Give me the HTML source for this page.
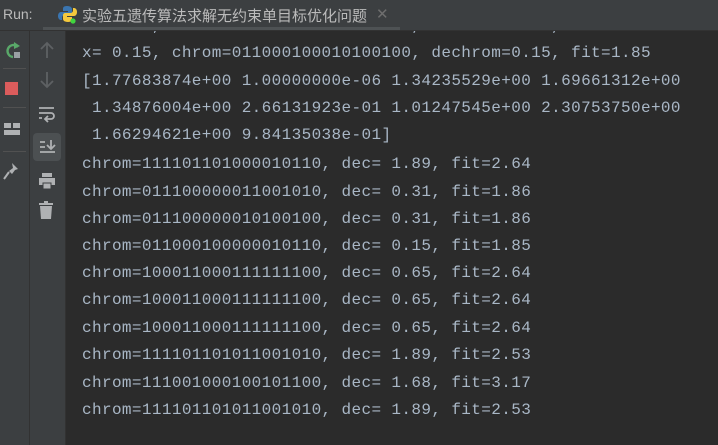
<!DOCTYPE html>
<html><head><meta charset="utf-8"><style>
*{margin:0;padding:0}
body{width:718px;height:445px;background:#2b2b2b;overflow:hidden;position:relative;font-family:"Liberation Mono",monospace}
#hdr{position:absolute;left:0;top:0;width:718px;height:30px;background:#3c3f41;border-bottom:1px solid #323232;z-index:2}
#hdr .run{position:absolute;left:3px;top:6px;font:14px "Liberation Sans",sans-serif;color:#bbbbbb}
#hdr .title{position:absolute;left:82px;top:5px;font:15px "Liberation Sans","Noto Sans CJK SC",sans-serif;color:#bbbbbb}
#hdr .x{position:absolute;left:376px;top:5px;font:15px "Liberation Sans",sans-serif;color:#6e6e6e}
#hdr .ul{position:absolute;left:43px;top:27px;width:357px;height:3px;background:#4e5254}
#lb{position:absolute;left:0;top:31px;width:29px;height:414px;background:#3c3f41;border-right:1px solid #323232}
#lb2{position:absolute;left:30px;top:31px;width:35px;height:414px;background:#3c3f41;border-right:1px solid #323232}
.l{position:absolute;left:82px;font-size:16px;letter-spacing:0.38px;color:#a9b7c6;white-space:pre;line-height:18px}
.sep{position:absolute;left:0;width:23px;height:1px;background:#515151}
</style></head><body>
<div id="hdr"><span class="run">Run:</span>
<svg style="position:absolute;left:58px;top:5px" width="19" height="19" viewBox="0 0 19 19"><path d="M9 1c-4 0-4 2-4 3v2h5v1H3c-2 0-3 2-3 4s1 4 3 4h1v-2c0-2 1-3 3-3h5c1 0 2-1 2-2V4c0-1-1-3-5-3z" fill="#3a75b0"/><path d="M10 17c4 0 4-2 4-3v-2H9v-1h7c2 0 3-2 3-4s-1-4-3-4h-1v2c0 2-1 3-3 3H7c-1 0-2 1-2 2v4c0 1 1 3 5 3z" fill="#f5c93d"/><circle cx="15" cy="16" r="2.6" fill="#3fd63f"/></svg>
<span class="title">实验五遗传算法求解无约束单目标优化问题</span><span class="x">✕</span><div class="ul"></div></div>
<div id="lb">
<svg style="position:absolute;left:4px;top:10px" width="18" height="20"><path d="M14 6A6 6 0 1 0 9 16" stroke="#59a869" stroke-width="2.4" fill="none"/><path d="M10 1l6 4-6 3z" fill="#59a869"/><rect x="10" y="11" width="6" height="6" fill="#9aa0a4"/></svg>
<div class="sep" style="top:37px;left:3px"></div>
<div style="position:absolute;left:5px;top:51px;width:13px;height:13px;background:#db5c5c"></div>
<div class="sep" style="top:76px;left:3px"></div>
<svg style="position:absolute;left:3px;top:91px" width="18" height="14"><rect x="1" y="1" width="7" height="5" fill="#afb1b3"/><rect x="10" y="1" width="7" height="5" fill="#afb1b3"/><rect x="1" y="8" width="16" height="5" fill="#afb1b3"/></svg>
<div class="sep" style="top:120px;left:3px"></div>
<svg style="position:absolute;left:2px;top:130px" width="18" height="20"><path d="M10 2l6 6-3 1-3 4-3-3 4-3z" fill="#afb1b3"/><path d="M7 11l-5 7" stroke="#afb1b3" stroke-width="2"/></svg>
</div>
<div id="lb2">
<svg style="position:absolute;left:8px;top:10px" width="18" height="18"><path d="M9 2v15M3 8l6-6 6 6" stroke="#5e6163" stroke-width="1.8" fill="none"/></svg>
<svg style="position:absolute;left:8px;top:40px" width="18" height="18"><path d="M9 1v15M3 10l6 6 6-6" stroke="#5e6163" stroke-width="1.8" fill="none"/></svg>
<svg style="position:absolute;left:8px;top:74px" width="18" height="18"><path d="M1 3h15M1 8h12a3 3 0 0 1 0 6H8M10 11l-3 3 3 3M1 13h3" stroke="#afb1b3" stroke-width="1.8" fill="none"/></svg>
<div style="position:absolute;left:3px;top:102px;width:28px;height:28px;background:#4c5052;border-radius:4px"></div>
<svg style="position:absolute;left:8px;top:107px" width="20" height="18"><path d="M2 4h5M2 9h5M2 14h15M13 2v9M9 7l4 4 4-4" stroke="#afb1b3" stroke-width="1.8" fill="none"/></svg>
<svg style="position:absolute;left:8px;top:141px" width="20" height="18"><rect x="4" y="1" width="10" height="4" fill="#afb1b3"/><rect x="1" y="6" width="16" height="7" fill="#afb1b3"/><rect x="5" y="11" width="8" height="6" fill="#afb1b3" stroke="#3c3f41" stroke-width="1"/></svg>
<svg style="position:absolute;left:9px;top:170px" width="18" height="20"><rect x="0" y="2" width="14" height="2" fill="#afb1b3"/><rect x="5" y="0" width="4" height="2" fill="#afb1b3"/><path d="M1 5h12l-1 13H2z" fill="#afb1b3"/></svg>
</div>
<div class="l" style="top:17px">x= 1.89, chrom=111101101011001010, dechrom=1.89, fit=2.53</div>
<div class="l" style="top:44px">x= 0.15, chrom=011000100010100100, dechrom=0.15, fit=1.85</div>
<div class="l" style="top:72px">[1.77683874e+00 1.00000000e-06 1.34235529e+00 1.69661312e+00</div>
<div class="l" style="top:99px"> 1.34876004e+00 2.66131923e-01 1.01247545e+00 2.30753750e+00</div>
<div class="l" style="top:126px"> 1.66294621e+00 9.84135038e-01]</div>
<div class="l" style="top:155px">chrom=111101101000010110, dec= 1.89, fit=2.64</div>
<div class="l" style="top:183px">chrom=011100000011001010, dec= 0.31, fit=1.86</div>
<div class="l" style="top:210px">chrom=011100000010100100, dec= 0.31, fit=1.86</div>
<div class="l" style="top:237px">chrom=011000100000010110, dec= 0.15, fit=1.85</div>
<div class="l" style="top:264px">chrom=100011000111111100, dec= 0.65, fit=2.64</div>
<div class="l" style="top:291px">chrom=100011000111111100, dec= 0.65, fit=2.64</div>
<div class="l" style="top:319px">chrom=100011000111111100, dec= 0.65, fit=2.64</div>
<div class="l" style="top:346px">chrom=111101101011001010, dec= 1.89, fit=2.53</div>
<div class="l" style="top:374px">chrom=111001000100101100, dec= 1.68, fit=3.17</div>
<div class="l" style="top:401px">chrom=111101101011001010, dec= 1.89, fit=2.53</div>
</body></html>
